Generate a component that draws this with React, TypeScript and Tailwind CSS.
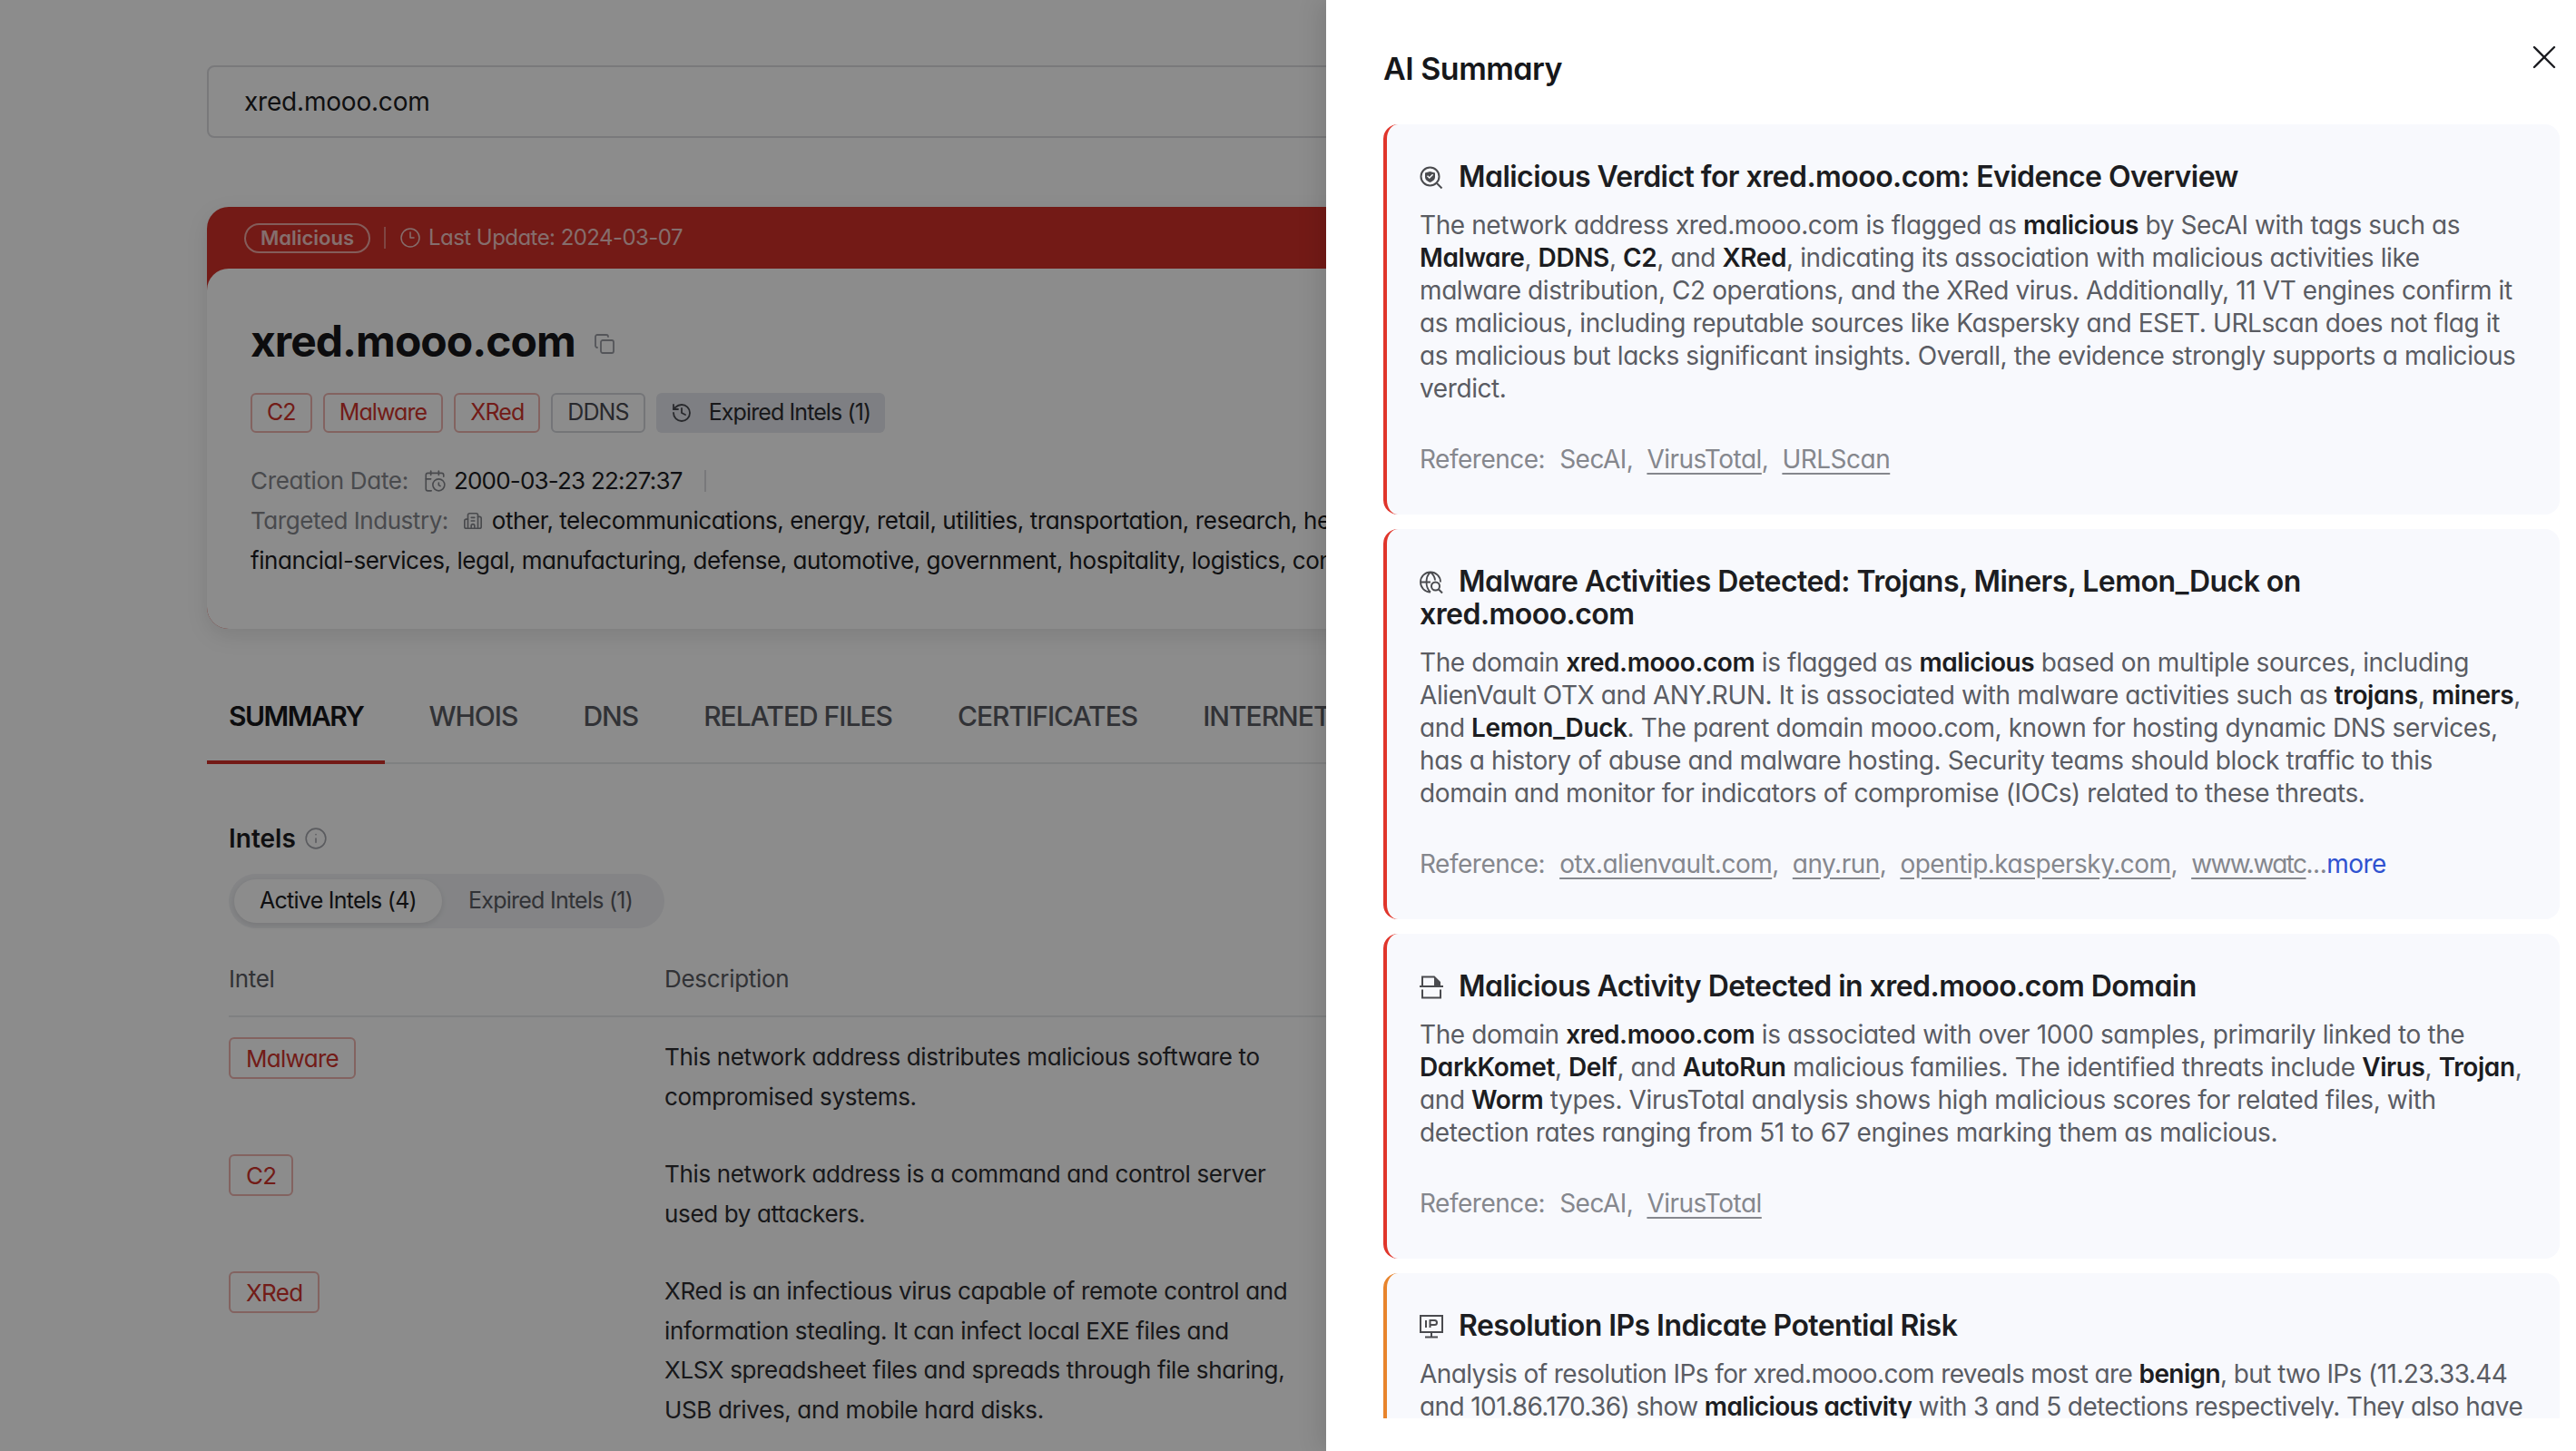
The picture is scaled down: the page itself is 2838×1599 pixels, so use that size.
import { Building2, CalendarClock, Clock3, Copy, History, Info, X } from 'lucide-react';
import type { ReactNode } from 'react';

const TABS = ['SUMMARY', 'WHOIS', 'DNS', 'RELATED FILES', 'CERTIFICATES', 'INTERNET MAPPING'];

const INTELS = [
  { tag: 'Malware', text: 'This network address distributes malicious software to compromised systems.' },
  { tag: 'C2', text: 'This network address is a command and control server used by attackers.' },
  { tag: 'XRed', text: 'XRed is an infectious virus capable of remote control and information stealing. It can infect local EXE files and XLSX spreadsheet files and spreads through file sharing, USB drives, and mobile hard disks.' },
];

function B({ children }: { children: ReactNode }) {
  return <span className="font-semibold text-[#1c1d21]">{children}</span>;
}

function Tag({ children, gray, large }: { children: ReactNode; gray?: boolean; large?: boolean }) {
  return (
    <span className={`flex items-center rounded-[6px] border-2 ${large ? 'h-[46px] px-[17px] text-[26px] tracking-[-0.7px]' : 'h-[44px] px-[16px] text-[25px] tracking-[-0.9px]'} ${gray ? 'border-[#d3d5da] text-[#4a4c52]' : 'border-[#eeb4b0] text-[#d0342c]'}`}>
      {children}
    </span>
  );
}

function ShieldSearchIcon() {
  return (
    <svg viewBox="0 0 26 26" className="h-[26px] w-[26px] fill-none stroke-[#4a4b4f] stroke-2">
      <circle cx="11.5" cy="11.5" r="10" />
      <path d="M19 19l5.5 5.5" />
      <path d="M6 7.5l5.5-1.5 5.5 1.5v4.5c0 3-2.5 4.8-5.500 6-3-1.200-5.500-3-5.500-6z" fill="#4a4b4f" stroke="none" />
      <path d="M8.500 10.800l2.300 2.200 3.800-3.800" stroke="#f8f9fd" strokeWidth="1.500" />
    </svg>
  );
}

function GlobeSearchIcon() {
  return (
    <svg viewBox="0 0 26 26" className="h-[26px] w-[26px] fill-none stroke-[#4a4b4f] stroke-[1.8]">
      <path d="M12 23.500a11 11 0 1 1 11-11" />
      <path d="M1 12.500h11M12 1.500c-6 5-6 17 0 22M12 1.500c3.500 3 5 6.500 5 9" />
      <circle cx="17.500" cy="17" r="4.500" strokeWidth="2" />
      <path d="M21 20.500l4 4" strokeWidth="2" />
    </svg>
  );
}

function FileHalfIcon() {
  return (
    <svg viewBox="0 0 26 26" className="h-[26px] w-[26px] fill-none stroke-[#4a4b4f] stroke-2">
      <path d="M3 11V1.500h13l6 6V11" />
      <path d="M16 1.500l6 6v3.500h-6z" fill="#4a4b4f" stroke="none" />
      <path d="M0 12h26" />
      <path d="M3 15.500v9h20v-9" />
    </svg>
  );
}

function IpMonitorIcon() {
  return (
    <svg viewBox="0 0 26 26" className="h-[26px] w-[26px] fill-none stroke-[#4a4b4f] stroke-2">
      <rect x="1" y="1" width="24" height="18" />
      <path d="M7 6v8M11.500 14V6h5a2.500 2.500 0 0 1 0 5h-5" />
      <path d="M13 19v5M6 24.500h14" />
    </svg>
  );
}

function Refs({ plain, links, more }: { plain?: string; links: string[]; more?: boolean }) {
  return (
    <div className="mt-[42px] flex h-[36px] items-center text-[28px] tracking-[-0.5px] text-[#85878d]">
      <span className="mr-[16px]">Reference:</span>
      {plain && <span className="mr-[15px]">{plain},</span>}
      {links.map((l, i) => (
        <span key={l} className={i === links.length - 1 ? '' : 'mr-[15px]'}>
          <span className={`underline underline-offset-[5px] ${more && i === links.length - 1 ? 'tracking-[-1.6px]' : ''}`}>{l}</span>
          {i < links.length - 1 && ','}
        </span>
      ))}
      {more && (
        <span>
          ...<span className="text-[#2f52d0]">more</span>
        </span>
      )}
    </div>
  );
}

function SummaryCard({ icon, title, accent, body, refs }: { icon: ReactNode; title: ReactNode; accent: string; body: ReactNode; refs?: ReactNode }) {
  return (
    <div className={`rounded-[16px] border-l-4 bg-[#f8f9fd] pr-[40px] pl-[36px] ${accent} pt-[40px] pb-[43px]`}>
      <h3 className="text-[32px] leading-[36px] font-semibold tracking-[-0.55px] text-[#1c1d21]">
        <span className="mr-[17px] inline-block align-[-3px]">{icon}</span>
        {title}
      </h3>
      <p className="mt-[17px] text-[28px] leading-[36px] tracking-[-0.4px] text-[#5a5c63]">{body}</p>
      {refs}
    </div>
  );
}

export default function App() {
  return (
    <div className="relative h-[1599px] w-[2838px] overflow-hidden bg-white font-['Inter',sans-serif] [font-feature-settings:'cv11']">
      <main className="pt-[72px] pl-[228px]">
        <div className="flex h-[80px] w-[2382px] items-center rounded-[8px] border-2 border-[#dcdde1] pl-[39px] text-[28px] tracking-[-0.2px] text-[#1c1d21]">
          xred.mooo.com
        </div>

        <section className="mt-[76px] w-[2382px] rounded-[24px] bg-[#d13129] shadow-[0_8px_24px_rgba(0,0,0,0.1)]">
          <div className="flex h-[68px] items-center pl-[41px] text-[24px] tracking-[-0.55px] text-[#f3c9c6]">
            <span className="flex h-[33px] items-center rounded-full border-2 border-[#f0a9a5] px-[16px] text-[22px] font-semibold tracking-normal">Malicious</span>
            <span className="mx-[15px] h-[24px] w-[2px] bg-[#e8807a]" />
            <Clock3 className="mr-[8px] h-[24px] w-[24px]" strokeWidth={1.5} />
            Last Update: 2024-03-07
          </div>
          <div className="h-[397px] rounded-[24px] bg-white pt-[56px] pl-[48px]">
            <div className="flex items-center">
              <h1 className="text-[48px] leading-[48px] font-bold tracking-[-1px] text-[#16171a]">xred.mooo.com</h1>
              <Copy className="mt-[6px] ml-[20px] h-[24px] w-[24px] text-[#9a9ca3]" strokeWidth={1.8} />
            </div>
            <div className="mt-[33px] flex gap-[12px]">
              <Tag>C2</Tag>
              <Tag>Malware</Tag>
              <Tag>XRed</Tag>
              <Tag gray>DDNS</Tag>
              <span className="flex h-[44px] items-center rounded-[6px] bg-[#e6e8ee] px-[16px] text-[25px] tracking-[-0.9px] text-[#2c2d31]">
                <History className="mr-[18px] h-[24px] w-[24px] text-[#4a4c52]" strokeWidth={1.8} />
                Expired Intels (1)
              </span>
            </div>
            <div className="mt-[31px] text-[26px] leading-[44px] tracking-[-0.45px] text-[#1c1d21]">
              <div className="flex items-center">
                <span className="mr-[16px] tracking-[-0.3px] text-[#85878d]">Creation Date:</span>
                <CalendarClock className="mr-[8px] h-[26px] w-[26px] text-[#85878d]" strokeWidth={1.5} />
                <span className="tracking-[-0.8px]">2000-03-23 22:27:37</span>
                <span className="ml-[24px] h-[24px] w-[2px] bg-[#dcdde1]" />
              </div>
              <div className="flex items-center whitespace-nowrap">
                <span className="mr-[16px] text-[#85878d]">Targeted Industry:</span>
                <Building2 className="mr-[10px] h-[22px] w-[22px] text-[#85878d]" strokeWidth={1.8} />
                other, telecommunications, energy, retail, utilities, transportation, research, healthcare, education
              </div>
              <div className="whitespace-nowrap">financial-services, legal, manufacturing, defense, automotive, government, hospitality, logistics, consulting</div>
            </div>
          </div>
        </section>

        <nav className="mt-[64px] flex h-[85px] w-[2382px] gap-[24px] border-b-2 border-[#e8e9ec] text-[30px] leading-[64px] tracking-[-1px] text-[#5a5c63]">
          {TABS.map((t, i) => (
            <div key={t} className={`h-[85px] px-[24px] whitespace-nowrap ${i === 0 ? 'border-b-4 border-[#d13129] font-semibold tracking-[-1.5px] text-[#16171a]' : 'font-medium'}`}>
              {t}
            </div>
          ))}
        </nav>

        <div className="pl-[24px]">
          <div className="mt-[64px] flex items-center text-[28px] leading-[36px] font-semibold text-[#1c1d21]">
            Intels
            <Info className="ml-[9px] h-[26px] w-[26px] text-[#a5a7ad]" strokeWidth={1.5} />
          </div>
          <div className="mt-[21px] flex h-[60px] w-[480px] items-center rounded-full bg-[#f0f1f4] pl-[6px] text-[25px] tracking-[-0.75px]">
            <span className="flex h-[48px] w-[229px] items-center justify-center rounded-full bg-white text-[#1c1d21] shadow-[0_2px_6px_rgba(0,0,0,0.1)]">Active Intels (4)</span>
            <span className="ml-[29px] text-[#5a5c63]">Expired Intels (1)</span>
          </div>
          <div className="mt-[32px] grid h-[66px] w-[2358px] grid-cols-[480px_1fr] border-b-2 border-[#e8e9ec] text-[26px] leading-[48px] tracking-[-0.3px] text-[#5a5c63]">
            <span>Intel</span>
            <span>Description</span>
          </div>
          {INTELS.map((row) => (
            <div key={row.tag} className="grid grid-cols-[480px_691px] pt-[22px] pb-[20px]">
              <div className="flex items-start">
                <Tag large>{row.tag}</Tag>
              </div>
              <p className="text-[26px] leading-[43.500px] tracking-[-0.35px] text-[#2c2d31]">{row.text}</p>
            </div>
          ))}
        </div>
      </main>

      <div className="absolute inset-0 bg-black/45" />

      <aside className="absolute top-0 right-0 h-[1599px] w-[1377px] bg-white pl-[63px] shadow-[-8px_0_24px_rgba(0,0,0,0.1)]">
        <h2 className="pt-[58px] text-[34px] leading-[36px] font-semibold tracking-[-0.5px] text-[#16171a]">AI Summary</h2>
        <X className="absolute top-[41px] right-[13px] h-[44px] w-[44px] text-[#1c1d21]" strokeWidth={1.3} />
        <div className="mt-[43px] flex h-[1426px] w-[1296px] flex-col gap-[16px] overflow-hidden">
          <SummaryCard
            accent="border-[#e0352b]"
            icon={<ShieldSearchIcon />}
            title="Malicious Verdict for xred.mooo.com: Evidence Overview"
            body={
              <>
                The network address xred.mooo.com is flagged as <B>malicious</B> by SecAI with tags such as <B>Malware</B>, <B>DDNS</B>, <B>C2</B>, and <B>XRed</B>, indicating its association with malicious activities like malware distribution, C2 operations, and the XRed virus. Additionally, 11 VT engines confirm it as malicious, including reputable sources like Kaspersky and ESET. URLscan does not flag it as malicious but lacks significant insights. Overall, the evidence strongly supports a malicious verdict.
              </>
            }
            refs={<Refs plain="SecAI" links={['VirusTotal', 'URLScan']} />}
          />
          <SummaryCard
            accent="border-[#e0352b]"
            icon={<GlobeSearchIcon />}
            title={
              <>
                Malware Activities Detected: Trojans, Miners, Lemon_Duck on
                <br />
                xred.mooo.com
              </>
            }
            body={
              <>
                The domain <B>xred.mooo.com</B> is flagged as <B>malicious</B> based on multiple sources, including AlienVault OTX and ANY.RUN. It is associated with malware activities such as <B>trojans</B>, <B>miners</B>, and <B>Lemon_Duck</B>. The parent domain mooo.com, known for hosting dynamic DNS services, has a history of abuse and malware hosting. Security teams should block traffic to this
                <br />
                domain and monitor for indicators of compromise (IOCs) related to these threats.
              </>
            }
            refs={<Refs links={['otx.alienvault.com', 'any.run', 'opentip.kaspersky.com', 'www.watc']} more />}
          />
          <SummaryCard
            accent="border-[#e0352b]"
            icon={<FileHalfIcon />}
            title="Malicious Activity Detected in xred.mooo.com Domain"
            body={
              <>
                The domain <B>xred.mooo.com</B> is associated with over 1000 samples, primarily linked to the <B>DarkKomet</B>, <B>Delf</B>, and <B>AutoRun</B> malicious families. The identified threats include <B>Virus</B>, <B>Trojan</B>, and <B>Worm</B> types. VirusTotal analysis shows high malicious scores for related files, with detection rates ranging from 51 to 67 engines marking them as malicious.
              </>
            }
            refs={<Refs plain="SecAI" links={['VirusTotal']} />}
          />
          <SummaryCard
            accent="border-[#e8842c]"
            icon={<IpMonitorIcon />}
            title="Resolution IPs Indicate Potential Risk"
            body={
              <span className="tracking-[-0.6px] whitespace-nowrap">
                Analysis of resolution IPs for xred.mooo.com reveals most are <B>benign</B>, but two IPs (11.23.33.44
                <br />
                and 101.86.170.36) show <B>malicious activity</B> with 3 and 5 detections respectively. They also have
              </span>
            }
          />
        </div>
      </aside>
    </div>
  );
}
